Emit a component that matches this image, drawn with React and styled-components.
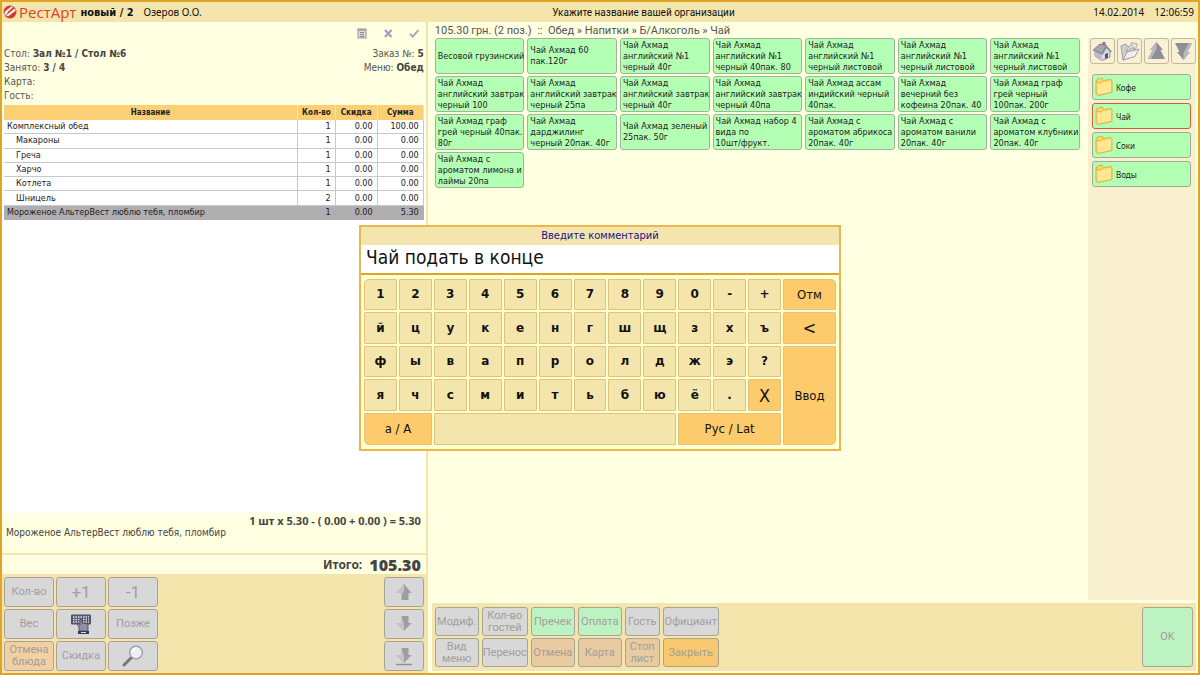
import React, { useState } from "react";
import styled, { createGlobalStyle } from "styled-components";

const tahoma = '"DejaVu Sans Condensed", "DejaVu Sans", sans-serif';

const GlobalStyle = createGlobalStyle`
  * {
    box-sizing: border-box;
  }

  body {
    margin: 0;
    background: #ffffe1;
    color: #222;
    font-family: "Noto Sans", "DejaVu Sans", sans-serif;
    font-size: 10px;
  }

  button, input {
    font-family: inherit;
    margin: 0;
  }
`;

const orderRows = [
  { name: "Комплексный обед", qty: 1, discount: "0.00", sum: "100.00" },
  { name: "Макароны", qty: 1, discount: "0.00", sum: "0.00", nested: true },
  { name: "Греча", qty: 1, discount: "0.00", sum: "0.00", nested: true },
  { name: "Харчо", qty: 1, discount: "0.00", sum: "0.00", nested: true },
  { name: "Котлета", qty: 1, discount: "0.00", sum: "0.00", nested: true },
  { name: "Шницель", qty: 2, discount: "0.00", sum: "0.00", nested: true },
  { name: "Мороженое АльтерВест люблю тебя, пломбир", qty: 1, discount: "0.00", sum: "5.30", selected: true },
];

const products = [
  "Весовой грузинский",
  "Чай Ахмад 60\nпак.120г",
  "Чай Ахмад\nанглийский №1\nчерный 40г",
  "Чай Ахмад\nанглийский №1\nчерный 40пак. 80",
  "Чай Ахмад\nанглийский №1\nчерный листовой",
  "Чай Ахмад\nанглийский №1\nчерный листовой",
  "Чай Ахмад\nанглийский №1\nчерный листовой",
  "Чай Ахмад\nанглийский завтрак\nчерный 100",
  "Чай Ахмад\nанглийский завтрак\nчерный 25па",
  "Чай Ахмад\nанглийский завтрак\nчерный 40г",
  "Чай Ахмад\nанглийский завтрак\nчерный 40па",
  "Чай Ахмад ассам\nиндийский черный\n40пак.",
  "Чай Ахмад\nвечерний без\nкофеина 20пак. 40",
  "Чай Ахмад граф\nгрей черный\n100пак. 200г",
  "Чай Ахмад граф\nгрей черный 40пак.\n80г",
  "Чай Ахмад\nдарджилинг\nчерный 20пак. 40г",
  "Чай Ахмад зеленый\n25пак. 50г",
  "Чай Ахмад набор 4\nвида по\n10шт/фрукт.",
  "Чай Ахмад с\nароматом абрикоса\n20пак. 40г",
  "Чай Ахмад с\nароматом ванили\n20пак. 40г",
  "Чай Ахмад с\nароматом клубники\n20пак. 40г",
  "Чай Ахмад с\nароматом лимона и\nлаймы 20па",
];

const categories = ["Кофе", "Чай", "Соки", "Воды"];

const keyRows = ["1234567890-+", "йцукенгшщзхъ", "фывапролджэ?", "ячсмитьбюё."];

const Screen = styled.div`
  position: relative;
  display: flex;
  flex-direction: column;
  min-height: 100vh;
  border: 2px solid #e0a526;
`;

const Header = styled.header`
  display: grid;
  grid-template-columns: 1fr auto 1fr;
  align-items: center;
  height: 20px;
  padding: 0 4px 0 1px;
  background: #f3e5ab;
  color: #111;
  font-size: 10px;
`;

const HeaderLeft = styled.div`
  display: flex;
  align-items: center;
`;

const Logo = styled.div`
  display: flex;
  align-items: center;
  gap: 2px;
  margin-right: 4px;
  color: #d8432b;
  font-family: "Open Sans", sans-serif;
  font-size: 15px;
  line-height: 18px;
`;

const OrderName = styled.strong`
  margin-right: 10px;
  font-family: ${tahoma};
  font-size: 11px;
`;

const Org = styled.h1`
  margin: 0 0 0 90px;
  font-family: Roboto, sans-serif;
  font-size: 10px;
  font-weight: normal;
`;

const Clock = styled.div`
  display: flex;
  justify-content: flex-end;
  gap: 10px;
`;

const Main = styled.main`
  flex: 1;
  display: flex;
`;

const OrderPanel = styled.section`
  flex: 0 0 35.6%;
  display: flex;
  flex-direction: column;
  border-right: 2px solid #f3e5ab;
`;

const OrderTools = styled.div`
  display: flex;
  justify-content: flex-end;
  gap: 14px;
  height: 25px;
  padding: 5px 6px 0 0;
`;

const ToolButton = styled.button`
  display: flex;
  width: 12px;
  height: 12px;
  padding: 0;
  border: 0;
  background: none;
`;

const OrderInfo = styled.div`
  display: flex;
  justify-content: space-between;
  height: 58px;
  padding: 0 2px;
  color: #555;
  font-family: ${tahoma};
  line-height: 14px;

  b {
    color: #444;
  }
`;

const InfoRight = styled.div`
  text-align: right;
`;

const TableWrap = styled.div`
  flex: 1;
  padding: 0 2px;
  background: #fff;
`;

const OrderTable = styled.table`
  width: 100%;
  height: 115px;
  border-collapse: collapse;
  table-layout: fixed;
  font-family: ${tahoma};
  font-size: 9px;
  line-height: 11px;
`;

const Th = styled.th`
  width: ${(p) => p.$width || "auto"};
  height: 15px;
  padding: 0;
  border-right: 1px solid #ffe2a5;
  background: #fbcf74;
  font-size: 8px;
`;

const Td = styled.td`
  padding: 0 4px 0 ${(p) => (p.$nested ? 12 : 3)}px;
  border: 1px solid #c8c8d0;
  border-width: 0 1px 1px 0;
  text-align: ${(p) => (p.$num ? "right" : "left")};
`;

const Tr = styled.tr`
  background: ${(p) => (p.$selected ? "#b0aeb1" : "#fff")};

  ${Td} {
    ${(p) => p.$selected && "border-color: #b0aeb1;"}
  }
`;

const Detail = styled.div`
  height: 42px;
  padding: 2px 5px 0 4px;
  border-bottom: 2px solid #f3e5ab;
  background: #ffffe1;
  color: #444;
  font-family: ${tahoma};
  font-size: 10px;
  line-height: 12px;
`;

const Calc = styled.div`
  font-family: "Noto Sans", sans-serif;
  font-size: 11px;
  font-weight: bold;
  text-align: right;
`;

const Total = styled.div`
  display: flex;
  justify-content: flex-end;
  align-items: center;
  gap: 7px;
  height: 19px;
  padding-right: 5px;
  color: #444;
  font-size: 12px;
  font-weight: bold;

  strong {
    font-size: 16px;
  }
`;

const OrderActions = styled.div`
  display: flex;
  justify-content: space-between;
  height: 99px;
  padding: 3px 2px;
  background: #f3e5ab;
`;

const ActionGrid = styled.div`
  display: grid;
  grid-template-columns: ${(p) => p.$columns};
  grid-auto-rows: ${(p) => p.$row || 30}px;
  gap: 2px ${(p) => p.$gap || 2}px;
`;

const tones = {
  grey: "#d8d8d8",
  green: "#bdf2c3",
  tan: "#e8cba0",
  peach: "#f3cfa4",
  orange: "#f8c870",
};

const Action = styled.button`
  display: flex;
  align-items: center;
  justify-content: center;
  padding: 0;
  border: 1px solid #a9a393;
  border-radius: 3px;
  background: ${(p) => tones[p.$tone || "grey"]};
  color: #a19e9c;
  font-family: Roboto, sans-serif;
  font-size: ${(p) => (p.$large ? 17 : 11)}px;
  line-height: 12px;
  white-space: pre;
`;

const MenuPanel = styled.section`
  flex: 1;
  min-width: 0;
  display: flex;
  flex-direction: column;
  padding: 0 2px 2px 4px;
`;

const Breadcrumbs = styled.div`
  height: 16px;
  padding-left: 3px;
  color: #555;
  font-family: Roboto, sans-serif;
  font-size: 11px;
  line-height: 17px;
  white-space: pre;
`;

const MenuBody = styled.div`
  flex: 1;
  display: flex;
  gap: 8px;
  margin-bottom: 3px;
`;

const Products = styled.div`
  flex: 1;
  display: grid;
  grid-template-columns: repeat(7, 1fr);
  grid-auto-rows: 36px;
  gap: 2px 3px;
  padding-left: 3px;
`;

const Product = styled.button`
  display: flex;
  align-items: center;
  min-width: 0;
  padding: 0 0 0 2px;
  border: 1px solid #9fb59b;
  border-radius: 3px;
  background: #b3ffb3;
  color: #222;
  font-family: ${tahoma};
  font-size: 9px;
  line-height: 11px;
  text-align: left;
  white-space: pre;
`;

const Side = styled.aside`
  width: 108px;
  background: #f9f0d0;
`;

const SideTools = styled.div`
  display: grid;
  grid-template-columns: repeat(4, 25px);
  gap: 2px;
  padding-left: 2px;
`;

const SideTool = styled.button`
  display: flex;
  align-items: center;
  justify-content: center;
  height: 26px;
  padding: 0;
  border: 1px solid #c3b99f;
  border-radius: 3px;
  background: #f9f0d6;
`;

const Categories = styled.nav`
  display: flex;
  flex-direction: column;
  gap: 3px;
  padding: 10px 5px 0 4px;
`;

const Category = styled.button`
  display: flex;
  align-items: center;
  gap: 3px;
  height: 26px;
  padding: 0 2px;
  border: 1px solid ${(p) => (p.$active ? "#d0603c" : "#9fae93")};
  border-radius: 3px;
  background: #b3ffb3;
  color: #222;
  font-size: 8px;
`;

const Footer = styled.footer`
  display: flex;
  justify-content: space-between;
  padding: 4px 3px;
  background: #f3e5ab;
`;

const OkButton = styled(Action)`
  width: 51px;
`;

const Dialog = styled.form`
  position: absolute;
  top: 50%;
  left: 50%;
  transform: translate(-50%, -50%);
  width: 482px;
  border: 2px solid #eab64e;
  background: #ffffd0;
  font-family: ${tahoma};
`;

const DialogTitle = styled.label`
  display: block;
  height: 18px;
  background: #f3e5ab;
  color: #14148c;
  font-size: 11px;
  line-height: 18px;
  text-align: center;
`;

const Comment = styled.input`
  display: block;
  width: 100%;
  height: 30px;
  padding: 0 5px 3px;
  border: 0;
  border-bottom: 2px solid #e0a526;
  outline: none;
  background: #fff;
  color: #111;
  font-size: 19px;
`;

const Keyboard = styled.div`
  display: grid;
  grid-template-columns: repeat(12, 1fr) 53px;
  grid-template-rows: repeat(5, 1fr);
  gap: 2px;
  height: 174px;
  padding: 4px 3px;
`;

const Key = styled.button`
  grid-area: ${(p) => p.$area || "auto"};
  padding: 0;
  border: 1px solid #dfc378;
  border-radius: ${(p) => p.$radius || "1px"};
  background: ${(p) => (p.$special ? "#fdca6c" : "#f3e5ab")};
  color: #111;
  font-family: ${(p) => (p.$special ? "inherit" : '"DejaVu Sans", sans-serif')};
  font-size: ${(p) => (p.$special ? (p.$big ? 18 : 13) : 12)}px;
  font-weight: ${(p) => (p.$special ? "normal" : "bold")};
`;

const LogoMark = () => (
  <svg width="14" height="14" viewBox="0 0 14 14">
    <circle cx="7" cy="7" r="6.5" fill="#d23a2a" />
    <path d="M1 7.2L8.5 1.2L10 2.3L3.3 8.2ZM3 10.6L11.6 3.6L12.8 5.4L5 11.6Z" fill="#fff3e6" />
    <path d="M0.8 9.2L4 6.8L4.8 8L2 10.6Z" fill="#fff3e6" />
  </svg>
);

const ListIcon = () => (
  <svg width="12" height="12" viewBox="0 0 12 12">
    <rect x="2" y="2" width="8" height="9" fill="#ddd" stroke="#99958f" />
    <path d="M2 3h8M4 5.5h4M4 7.5h4M4 9.5h4" stroke="#888" />
  </svg>
);

const CrossIcon = () => (
  <svg width="12" height="12" viewBox="0 0 12 12">
    <path d="M3 3L9.5 10M9.5 3L3 10" stroke="#9c9ccb" strokeWidth="2.2" />
  </svg>
);

const CheckIcon = () => (
  <svg width="12" height="12" viewBox="0 0 12 12">
    <path d="M2 7L4.8 9.6L10.5 3.2" fill="none" stroke="#aaa6ae" strokeWidth="2" />
  </svg>
);

const FolderIcon = () => (
  <svg width="18" height="20" viewBox="0 0 18 20">
    <path d="M1 4.5L2 2.5L7 1L8.5 3.5L16 2.5L17 4V15.5L3 18.5L1 17Z" fill="#ffd867" stroke="#d5a13a" strokeWidth=".8" />
    <path d="M2.3 7L16 4.2V14.8L3.2 17.6Z" fill="#ffe894" />
    <path d="M1 5L6 6L8.5 3.5" fill="none" stroke="#dda942" strokeWidth=".8" />
  </svg>
);

const HomeIcon = () => (
  <svg width="21" height="21" viewBox="0 0 21 21">
    <path d="M3 9V15L10 19.5L18 16V10L14 5L9 12Z" fill="#d9d9e4" stroke="#777785" strokeWidth=".7" />
    <path d="M3 9.5L9.5 13V19L3 15Z" fill="#b9b9c8" />
    <path d="M1 9L8 3L14.5 4.5L9.7 12.8Z" fill="#a5a5b4" stroke="#666675" strokeWidth=".7" />
    <path d="M9.3 13L14.5 4.5L20 10.5L18.6 11.3L14.4 7.3L10.5 14Z" fill="#888899" />
    <path d="M13 13L16 12V16.6L13 18Z" fill="#555563" />
    <path d="M10.5 1h3v3h-3z" fill="#77778a" />
  </svg>
);

const OpenFolderIcon = () => (
  <svg width="21" height="21" viewBox="0 0 21 21">
    <path d="M2 5L7 3L9 6L15 4V15L4 19Z" fill="#d0d0d4" stroke="#8d8d94" strokeWidth=".8" />
    <path d="M4 19L8 11L20 8L16 15.5Z" fill="#eeeef0" stroke="#8d8d94" strokeWidth=".8" />
    <path d="M7 11C8 7 10 5 13 4L12 1.5L18.5 3L16 9L14.6 6.5C12 7 10 8 7 11Z" fill="#e3e3e6" stroke="#909098" strokeWidth=".7" />
  </svg>
);

const DoubleArrow = ({ down }) => (
  <svg width="19" height="20" viewBox="0 0 19 20">
    <g transform={down ? "rotate(180 9.5 10)" : undefined}>
      <path d="M9.5 1L16 9H13.5L18 18H1L5.5 9H3Z" fill="#8f8f98" />
      <path d="M9.5 1L3 9H5.5L1 18H4L9.5 8Z" fill="#b9b9c0" />
    </g>
  </svg>
);

const ArrowUpIcon = () => (
  <svg width="18" height="20" viewBox="0 0 18 20">
    <path d="M9 2L16.5 11H13.5V18H6.5V11H1.5Z" fill="#9d9da5" />
    <path d="M9 2L1.5 11H6.5V13L9 9Z" fill="#c2c2c7" />
  </svg>
);

const ArrowDownIcon = ({ bar }) => (
  <svg width="18" height="20" viewBox="0 0 18 20">
    <path d="M9 17L16.5 9H13.5V2H6.5V9H1.5Z" fill="#9d9da5" />
    <path d="M9 17L1.5 9H6.5V2L9 10Z" fill="#c2c2c7" />
    {bar && <path d="M1 18.5H17" stroke="#8d8d94" strokeWidth="1.4" />}
  </svg>
);

const KeyboardIcon = () => (
  <svg width="22" height="22" viewBox="0 0 22 22">
    <rect x="1" y="1.5" width="20" height="10" rx="1" fill="#53536b" />
    <path d="M3 4H19M3 6.5H19M3 9H19" stroke="#e4e4ee" strokeWidth="1.4" strokeDasharray="1.5 1" />
    <path d="M9 18V14L7 11L8.5 10L10 12V6.5H12V10L18 11V18Z" fill="#8f8fa7" stroke="#444458" strokeWidth=".8" />
    <path d="M8 18H19V21H8Z" fill="#3d3d58" />
    <path d="M11 19.5H16" stroke="#ddd" />
  </svg>
);

const MagnifierIcon = () => (
  <svg width="22" height="22" viewBox="0 0 22 22">
    <path d="M2 20L9 13" stroke="#77777c" strokeWidth="3" strokeLinecap="round" />
    <circle cx="14" cy="7.5" r="6.3" fill="#efeff8" stroke="#9b9ba3" strokeWidth="1.3" />
    <path d="M10.5 7C11 4.8 12.5 4 14 4" fill="none" stroke="#fff" strokeWidth="1.5" />
  </svg>
);

const Order = () => (
  <OrderPanel>
    <OrderTools>
      <ToolButton aria-label="Список"><ListIcon /></ToolButton>
      <ToolButton aria-label="Удалить"><CrossIcon /></ToolButton>
      <ToolButton aria-label="Подтвердить"><CheckIcon /></ToolButton>
    </OrderTools>
    <OrderInfo>
      <div>
        <div>Стол: <b>Зал №1 / Стол №6</b></div>
        <div>Занято: <b>3 / 4</b></div>
        <div>Карта:</div>
        <div>Гость:</div>
      </div>
      <InfoRight>
        <div>Заказ №: <b>5</b></div>
        <div>Меню: <b>Обед</b></div>
      </InfoRight>
    </OrderInfo>
    <TableWrap>
      <OrderTable>
        <thead>
          <tr>
            <Th>Название</Th>
            <Th $width="9%">Кол-во</Th>
            <Th $width="10%">Скидка</Th>
            <Th $width="11%">Сумма</Th>
          </tr>
        </thead>
        <tbody>
          {orderRows.map((row) => (
            <Tr key={row.name} $selected={row.selected}>
              <Td $nested={row.nested}>{row.name}</Td>
              <Td $num>{row.qty}</Td>
              <Td $num>{row.discount}</Td>
              <Td $num>{row.sum}</Td>
            </Tr>
          ))}
        </tbody>
      </OrderTable>
    </TableWrap>
    <Detail>
      <Calc>1 шт x 5.30 - ( 0.00 + 0.00 ) = 5.30</Calc>
      Мороженое АльтерВест люблю тебя, пломбир
    </Detail>
    <Total>
      Итого: <strong>105.30</strong>
    </Total>
    <OrderActions>
      <ActionGrid $columns="repeat(3, 50px)">
        <Action>Кол-во</Action>
        <Action $large>+1</Action>
        <Action $large>-1</Action>
        <Action>Вес</Action>
        <Action aria-label="Клавиатура"><KeyboardIcon /></Action>
        <Action>Позже</Action>
        <Action $tone="peach">{"Отмена\nблюда"}</Action>
        <Action>Скидка</Action>
        <Action aria-label="Поиск"><MagnifierIcon /></Action>
      </ActionGrid>
      <ActionGrid $columns="40px">
        <Action aria-label="Вверх"><ArrowUpIcon /></Action>
        <Action aria-label="Вниз"><ArrowDownIcon /></Action>
        <Action aria-label="В конец"><ArrowDownIcon bar /></Action>
      </ActionGrid>
    </OrderActions>
  </OrderPanel>
);

const Menu = () => (
  <MenuPanel>
    <Breadcrumbs>{"105.30 грн. (2 поз.)  ::  Обед » Напитки » Б/Алкоголь » Чай"}</Breadcrumbs>
    <MenuBody>
      <Products>
        {products.map((name, i) => (
          <Product key={i}>{name}</Product>
        ))}
      </Products>
      <Side>
        <SideTools>
          <SideTool aria-label="Домой"><HomeIcon /></SideTool>
          <SideTool aria-label="Назад"><OpenFolderIcon /></SideTool>
          <SideTool aria-label="Вверх"><DoubleArrow /></SideTool>
          <SideTool aria-label="Вниз"><DoubleArrow down /></SideTool>
        </SideTools>
        <Categories>
          {categories.map((name) => (
            <Category key={name} $active={name === "Чай"}>
              <FolderIcon />
              {name}
            </Category>
          ))}
        </Categories>
      </Side>
    </MenuBody>
    <Footer>
      <ActionGrid $columns="44px 46px 44px 44px 35px 56px" $row={29} $gap={3}>
        <Action>Модиф.</Action>
        <Action>{"Кол-во\nгостей"}</Action>
        <Action $tone="green">Пречек</Action>
        <Action $tone="green">Оплата</Action>
        <Action>Гость</Action>
        <Action>Официант</Action>
        <Action>{"Вид\nменю"}</Action>
        <Action>Перенос</Action>
        <Action $tone="tan">Отмена</Action>
        <Action $tone="tan">Карта</Action>
        <Action $tone="tan">{"Стоп\nлист"}</Action>
        <Action $tone="orange">Закрыть</Action>
      </ActionGrid>
      <OkButton $tone="green">OK</OkButton>
    </Footer>
  </MenuPanel>
);

const CommentDialog = () => {
  const [text, setText] = useState("Чай подать в конце");
  const type = (char) => setText((t) => t + char);

  return (
    <Dialog onSubmit={(e) => e.preventDefault()}>
      <DialogTitle htmlFor="comment">Введите комментарий</DialogTitle>
      <Comment id="comment" value={text} onChange={(e) => setText(e.target.value)} />
      <Keyboard>
        {keyRows.map((row, r) =>
          [...row].map((char, c) => (
            <Key
              key={char}
              type="button"
              $area={`${r + 1} / ${c + 1}`}
              $radius={r + c === 0 ? "5px 1px 1px 1px" : undefined}
              onClick={() => type(char)}
            >
              {char}
            </Key>
          ))
        )}
        <Key type="button" $special $big $area="4 / 12" onClick={() => setText("")}>X</Key>
        <Key type="button" $special $area="1 / 13" $radius="1px 5px 1px 1px">Отм</Key>
        <Key type="button" $special $big $area="2 / 13" onClick={() => setText((t) => t.slice(0, -1))}>&lt;</Key>
        <Key type="submit" $special $area="3 / 13 / 6 / 14" $radius="1px 1px 5px 1px">Ввод</Key>
        <Key type="button" $special $area="5 / 1 / 6 / 3" $radius="1px 1px 1px 5px">а / А</Key>
        <Key type="button" $area="5 / 3 / 6 / 10" aria-label="Пробел" onClick={() => type(" ")} />
        <Key type="button" $special $area="5 / 10 / 6 / 13">Рус / Lat</Key>
      </Keyboard>
    </Dialog>
  );
};

const App = () => (
  <>
    <GlobalStyle />
    <Screen>
      <Header>
        <HeaderLeft>
          <Logo><LogoMark />РестАрт</Logo>
          <OrderName>новый / 2</OrderName>
          Озеров О.О.
        </HeaderLeft>
        <Org>Укажите название вашей организации</Org>
        <Clock>
          <span>14.02.2014</span>
          <span>12:06:59</span>
        </Clock>
      </Header>
      <Main>
        <Order />
        <Menu />
      </Main>
      <CommentDialog />
    </Screen>
  </>
);

export default App;
